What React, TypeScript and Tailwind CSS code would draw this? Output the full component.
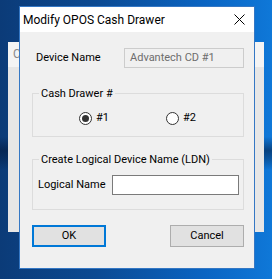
import React from "react";

function Radio({ checked }: { checked: boolean }) {
  return (
    <span className="w-[13px] h-[13px] rounded-full border border-[#333333] bg-white flex items-center justify-center">
      {checked && <span className="w-[7px] h-[7px] rounded-full bg-[#333333]" />}
    </span>
  );
}

export default function App() {
  return (
    <div
      className="relative w-[272px] h-[279px] overflow-hidden bg-[linear-gradient(180deg,rgba(0,0,0,0)_49%,rgba(2,22,55,0.55)_54%,rgba(2,22,55,0.35)_57%,rgba(0,0,0,0)_61%),linear-gradient(90deg,#0b3b78_0%,#0c4a92_35%,#0a64c2_75%,#0f78d8_100%)] text-black"
      style={{ fontFamily: "Roboto, 'Noto Sans', sans-serif" }}
    >
      {/* window behind */}
      <div className="absolute left-[8px] top-[42px] w-[256px] h-[190px] bg-[#e6e6e6] flex flex-col">
        <div className="h-[25px] bg-[#f4f4f4] pl-[5px] text-[12px] leading-[25px] text-[#8a8a8a]">C</div>
      </div>

      {/* dialog */}
      <div className="absolute left-[19px] top-[6px] w-[236px] h-[263px] border border-[#3477c4] bg-[#f0f0f0] flex flex-col">
        <div className="h-[25px] bg-white flex items-center justify-between pl-[3px] pr-[9px]">
          <span className="text-[12px] leading-[16px]">Modify OPOS Cash Drawer</span>
          <svg width="11" height="11" viewBox="0 0 11 11">
            <path d="M0.5 0.5 L10.5 10.5 M10.5 0.5 L0.5 10.5" stroke="#000" strokeWidth="1" fill="none" />
          </svg>
        </div>

        <div className="flex flex-col pl-[12px] pr-[10px] pt-[16px] text-[11px]">
          {/* Device name */}
          <div className="flex items-center h-[20px]">
            <span className="pl-[4px] w-[92px]">Device Name</span>
            <div className="flex-1 h-[20px] border border-[#cccccc] bg-[#f0f0f0] pl-[5px] flex items-center text-[#6d6d6d]">
              Advantech CD #1
            </div>
          </div>

          {/* Cash Drawer group */}
          <div className="relative mt-[25px] h-[44px] border border-[#dcdcdc] flex items-center">
            <span className="absolute left-[6px] top-[-8px] px-[2px] bg-[#f0f0f0] leading-[15px]">Cash Drawer #</span>
            <div className="flex items-center pl-[46px] pt-[6px]">
              <label className="flex items-center gap-[4px] w-[87px]">
                <Radio checked />
                <span>#1</span>
              </label>
              <label className="flex items-center gap-[4px]">
                <Radio checked={false} />
                <span>#2</span>
              </label>
            </div>
          </div>

          {/* LDN group */}
          <div className="relative mt-[22px] h-[51px] border border-[#dcdcdc] pt-[15px] pl-[5px] pr-[4px]">
            <span className="absolute left-[6px] top-[-8px] px-[2px] bg-[#f0f0f0] leading-[15px]">
              Create Logical Device Name (LDN)
            </span>
            <div className="flex items-center h-[20px]">
              <span className="w-[74px]">Logical Name</span>
              <div className="flex-1 h-[20px] border border-[#7a7a7a] bg-white" />
            </div>
          </div>

          {/* Buttons */}
          <div className="flex justify-between mt-[15px]">
            <button className="w-[74px] h-[22px] border-2 border-[#0078d7] bg-[#e1e1e1] text-[11px]">OK</button>
            <button className="w-[74px] h-[22px] border border-[#adadad] bg-[#e1e1e1] text-[11px]">Cancel</button>
          </div>
        </div>
      </div>
    </div>
  );
}
